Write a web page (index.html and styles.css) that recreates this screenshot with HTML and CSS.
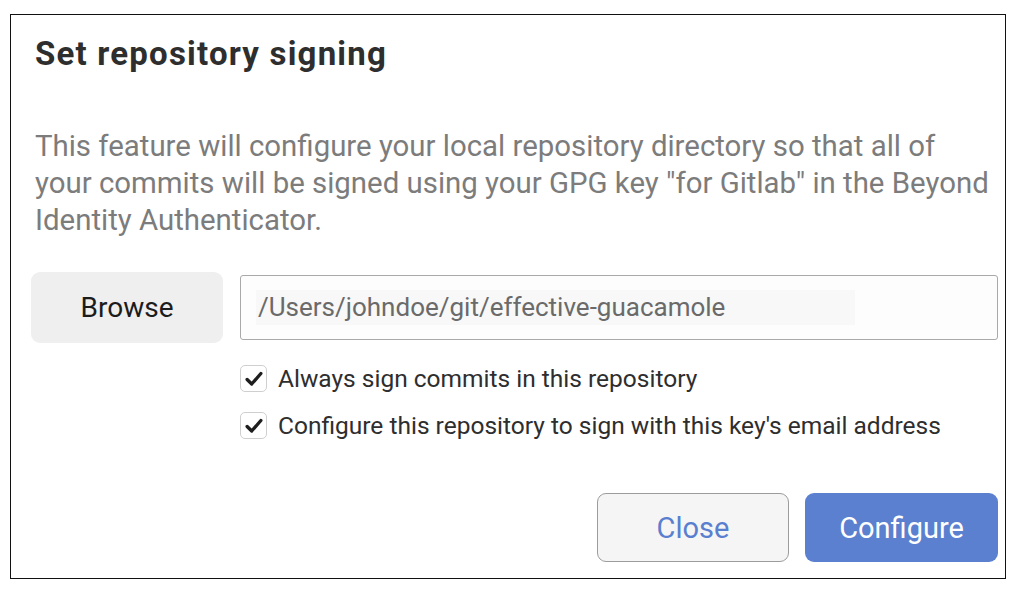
FILE: index.html
```html
<!DOCTYPE html>
<html>
<head>
<meta charset="utf-8">
<link rel="stylesheet" href="styles.css">
</head>
<body>
<div class="dialog">
  <h1 class="title">Set repository signing</h1>
  <p class="desc">This feature will configure your local repository directory so that all of your commits will be signed using your GPG key "for Gitlab" in the Beyond Identity Authenticator.</p>
  <div class="path-row">
    <button class="btn-browse">Browse</button>
    <div class="path-input"><span class="path-text">/Users/johndoe/git/effective-guacamole</span></div>
  </div>
  <div class="options">
    <label class="option">
      <span class="check"><svg viewBox="0 0 24 24" width="22" height="22"><path d="M4.5 12.5 L9.5 17.5 L19.5 6" fill="none" stroke="#1e1e1e" stroke-width="3.6" stroke-linecap="round" stroke-linejoin="round"/></svg></span>
      <span class="option-label">Always sign commits in this repository</span>
    </label>
    <label class="option">
      <span class="check"><svg viewBox="0 0 24 24" width="22" height="22"><path d="M4.5 12.5 L9.5 17.5 L19.5 6" fill="none" stroke="#1e1e1e" stroke-width="3.6" stroke-linecap="round" stroke-linejoin="round"/></svg></span>
      <span class="option-label">Configure this repository to sign with this key's email address</span>
    </label>
  </div>
  <div class="actions">
    <button class="btn btn-close">Close</button>
    <button class="btn btn-primary">Configure</button>
  </div>
</div>
</body>
</html>
```

FILE: styles.css
```css
html, body {
  margin: 0;
  padding: 0;
  background: #ffffff;
}

body {
  font-family: Roboto, "Liberation Sans", sans-serif;
}

.dialog {
  box-sizing: border-box;
  margin: 14px 0 0 10px;
  width: 996px;
  height: 565px;
  border: 1.5px solid #111;
  padding: 0 7px 0 20px;
  display: flex;
  flex-direction: column;
}

.title {
  margin: 19px 0 0 4px;
  font-size: 33px;
  font-weight: 700;
  letter-spacing: 1.2px;
  line-height: 40px;
  color: #2e2e2e;
}

.desc {
  margin: 54px 0 0 4px;
  font-size: 29.4px;
  line-height: 37px;
  color: #7c7c7c;
}

.path-row {
  margin-top: 33px;
  display: flex;
  align-items: center;
  gap: 17px;
}

.btn-browse {
  width: 192px;
  height: 71px;
  border: none;
  border-radius: 9px;
  background: #efefef;
  font-family: inherit;
  font-size: 28px;
  color: #1c1c1c;
  padding: 0;
}

.path-input {
  flex: 1;
  box-sizing: border-box;
  height: 65px;
  border: 1.5px solid #a9a9a9;
  border-radius: 3px;
  background: #fdfdfd;
  display: flex;
  align-items: center;
  padding-left: 15px;
}

.path-text {
  display: inline-block;
  width: 597px;
  line-height: 35px;
  background: #f8f8f8;
  font-size: 26px;
  color: #6a6a6a;
  padding-left: 2px;
}

.options {
  margin: 22px 0 0 209px;
  display: flex;
  flex-direction: column;
  gap: 20px;
}

.option {
  display: flex;
  align-items: center;
  gap: 11px;
}

.check {
  box-sizing: border-box;
  width: 27px;
  height: 27px;
  border: 1px solid #cfcfcf;
  border-radius: 5px;
  background: #fff;
  display: flex;
  align-items: center;
  justify-content: center;
}

.option-label {
  font-size: 24.5px;
  line-height: 27px;
  color: #2e2e2e;
}

.actions {
  margin-top: 54px;
  display: flex;
  justify-content: flex-end;
  gap: 16px;
}

.btn {
  box-sizing: border-box;
  width: 193px;
  height: 69px;
  border-radius: 9px;
  font-family: inherit;
  font-size: 29px;
  padding: 0;
}

.btn-close {
  width: 192px;
  background: #f5f5f5;
  border: 1.5px solid #9c9c9c;
  color: #5a7fcf;
}

.btn-primary {
  background: #5b80d0;
  border: none;
  color: #ffffff;
}
```
